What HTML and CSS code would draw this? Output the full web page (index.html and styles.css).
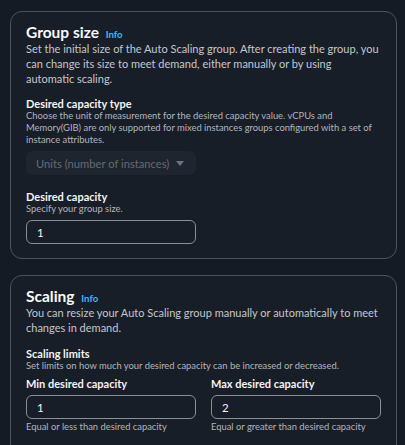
FILE: index.html
```html
<!DOCTYPE html>
<html lang="en">
<head>
<meta charset="utf-8">
<title>Auto Scaling group size</title>
<link rel="stylesheet" href="styles.css">
</head>
<body>
<main class="page">
  <section class="card">
    <header class="card-head">
      <h2 class="title">Group size <a class="info" href="#">Info</a></h2>
      <p class="desc">Set the initial size of the Auto Scaling group. After creating the group, you can change its size to meet demand, either manually or by using automatic scaling.</p>
    </header>
    <div class="field">
      <div class="label">Desired capacity type</div>
      <p class="hint">Choose the unit of measurement for the desired capacity value. vCPUs and Memory(GIB) are only supported for mixed instances groups configured with a set of instance attributes.</p>
      <div class="select half">
        <span class="select-text">Units (number of instances)</span>
        <svg class="caret" width="8" height="5" viewBox="0 0 8 5"><path d="M0 0H8L4 5Z" fill="currentColor"/></svg>
      </div>
    </div>
    <div class="field field-cap">
      <div class="label">Desired capacity</div>
      <p class="hint">Specify your group size.</p>
      <div class="input half">1</div>
    </div>
  </section>

  <section class="card card-scaling">
    <header class="card-head">
      <h2 class="title">Scaling <a class="info" href="#">Info</a></h2>
      <p class="desc">You can resize your Auto Scaling group manually or automatically to meet changes in demand.</p>
    </header>
    <div class="field">
      <div class="label">Scaling limits</div>
      <p class="hint">Set limits on how much your desired capacity can be increased or decreased.</p>
      <div class="cols">
        <div class="col">
          <div class="label">Min desired capacity</div>
          <div class="input">1</div>
          <p class="hint hint-after">Equal or less than desired capacity</p>
        </div>
        <div class="col">
          <div class="label">Max desired capacity</div>
          <div class="input">2</div>
          <p class="hint hint-after">Equal or greater than desired capacity</p>
        </div>
      </div>
    </div>
  </section>
</main>
</body>
</html>
```

FILE: styles.css
```css
html, body {
  margin: 0;
  padding: 0;
  height: 100%;
  overflow: hidden;
  background: #151b24;
}

body {
  font-family: Lato, "Open Sans", sans-serif;
  color: #c6c6cd;
}

.page {
  display: flex;
  flex-direction: column;
  gap: 16px;
  padding: 11px 8px 0 10px;
}

.card {
  background: #181e28;
  border: 1px solid #4a5361;
  border-radius: 12px;
  padding: 11px 15px 14px 15px;
}

.card-scaling {
  padding-bottom: 40px;
}

.card-head {
  margin-bottom: 11px;
}

.card-scaling .card-head {
  margin-bottom: 12px;
}

.title {
  margin: 0;
  font-size: 15.5px;
  line-height: 18px;
  font-weight: 700;
  color: #f9f9fa;
}

.info {
  margin-left: 3px;
  font-size: 9.6px;
  line-height: 1;
  font-weight: 700;
  color: #42b4ff;
  text-decoration: none;
}

.desc {
  margin: 0;
  font-size: 11px;
  line-height: 15px;
  color: #c6c6cd;
}

.label {
  font-size: 11px;
  line-height: 13px;
  font-weight: 700;
  color: #f3f3f7;
}

.hint {
  margin: 0;
  font-size: 9.4px;
  line-height: 12px;
  color: #b4b4bb;
}

.half {
  width: 170px;
}

.select {
  box-sizing: border-box;
  height: 24px;
  margin-top: 5px;
  border-radius: 7px;
  background: #1f252e;
  display: flex;
  align-items: center;
  justify-content: space-between;
  padding: 0 12px 0 10px;
  color: #636a77;
  white-space: nowrap;
}

.select-text {
  font-size: 11.2px;
}

.caret {
  flex: none;
  color: #6c7380;
}

.input {
  box-sizing: border-box;
  height: 24px;
  margin-top: 5px;
  border: 1px solid #8a8f98;
  border-radius: 6px;
  display: flex;
  align-items: center;
  padding: 0 10px;
  font-size: 11.5px;
  color: #f3f3f7;
}

.field-cap {
  margin-top: 15px;
}

.cols {
  display: grid;
  grid-template-columns: 170px 170px;
  column-gap: 15px;
  margin-top: 5px;
}

.hint-after {
  margin-top: 2px;
}
```
